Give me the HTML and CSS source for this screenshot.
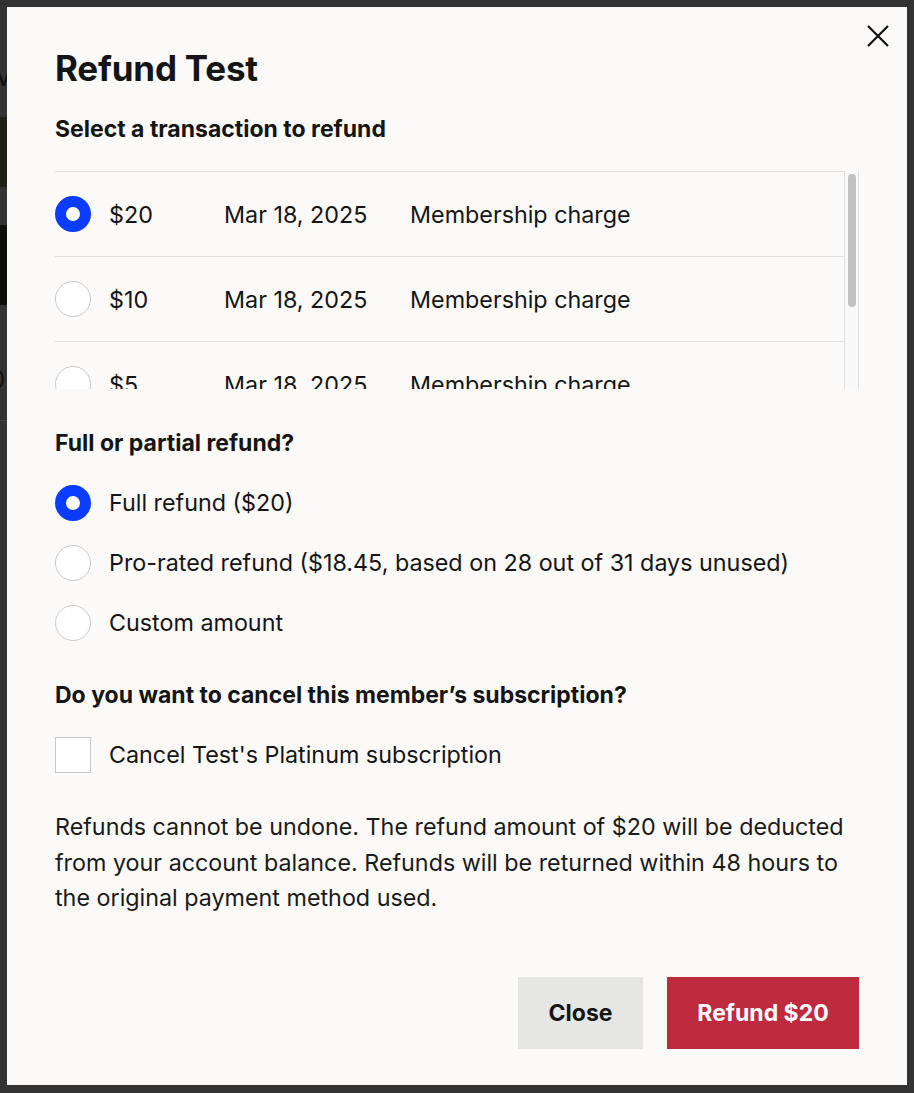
FILE: index.html
```html
<!DOCTYPE html>
<html lang="en">
<head>
<meta charset="utf-8">
<title>Refund Test</title>
<link rel="stylesheet" href="styles.css">
</head>
<body>
<div class="page">
  <div class="page-text">M</div>
  <div class="page-img img-a"></div>
  <div class="page-img img-b"></div>
  <div class="page-text small">0</div>
  <div class="page-rule"></div>
</div>
<div class="overlay">
  <div class="modal" role="dialog" aria-labelledby="title">
    <button class="close-x" aria-label="Close">
      <svg width="22" height="22" viewBox="0 0 22 22"><path d="M1 1L21 21M21 1L1 21" stroke="#111" stroke-width="2.2" fill="none"/></svg>
    </button>
    <h1 id="title" class="title">Refund Test</h1>
    <h2 class="section-title select-title">Select a transaction to refund</h2>
    <div class="tx-wrap">
      <div class="tx-list">
        <div class="tx-row">
          <span class="radio checked"></span>
          <span class="tx-amount">$20</span>
          <span class="tx-date">Mar 18, 2025</span>
          <span class="tx-desc">Membership charge</span>
        </div>
        <div class="tx-row">
          <span class="radio"></span>
          <span class="tx-amount">$10</span>
          <span class="tx-date">Mar 18, 2025</span>
          <span class="tx-desc">Membership charge</span>
        </div>
        <div class="tx-row">
          <span class="radio"></span>
          <span class="tx-amount">$5</span>
          <span class="tx-date">Mar 18, 2025</span>
          <span class="tx-desc">Membership charge</span>
        </div>
      </div>
      <div class="scrollbar"><div class="thumb"></div></div>
    </div>

    <h2 class="section-title refund-title">Full or partial refund?</h2>
    <div class="options">
      <div class="option"><span class="radio checked"></span><span>Full refund ($20)</span></div>
      <div class="option"><span class="radio"></span><span>Pro-rated refund ($18.45, based on 28 out of 31 days unused)</span></div>
      <div class="option"><span class="radio"></span><span>Custom amount</span></div>
    </div>

    <h2 class="section-title cancel-title">Do you want to cancel this member’s subscription?</h2>
    <div class="option check-option"><span class="checkbox"></span><span>Cancel Test's Platinum subscription</span></div>

    <p class="note">Refunds cannot be undone. The refund amount of $20 will be deducted from your account balance. Refunds will be returned within 48 hours to the original payment method used.</p>

    <div class="actions">
      <button class="btn btn-secondary">Close</button>
      <button class="btn btn-primary">Refund $20</button>
    </div>
  </div>
</div>
</body>
</html>
```
FILE: styles.css
```css
* { box-sizing: border-box; }
html, body { margin: 0; padding: 0; }
body {
  background: #333333;
  font-family: Inter, "Noto Sans", "Liberation Sans", sans-serif;
  color: #151515;
  width: 914px;
  height: 1093px;
  overflow: hidden;
}
.page {
  display: flex;
  flex-direction: column;
  width: 7px;
  padding-top: 55px;
  overflow: hidden;
}
.page-text { color: #111; font-size: 30px; line-height: 40px; margin-left: -10px; }
.page-text.small { font-size: 24px; margin-top: 55px; }
.page-img { width: 7px; }
.img-a { height: 70px; margin-top: 22px; background: #1c2016; }
.img-b { height: 80px; margin-top: 38px; background: #0e0e0c; }
.page-rule { height: 1px; background: #444; margin-top: 20px; }

.overlay {
  position: fixed;
  inset: 0;
  padding: 7px;
}
.modal {
  position: relative;
  width: 900px;
  height: 1078px;
  background: #fbfaf8;
  padding: 39px 48px 0 48px;
  display: flex;
  flex-direction: column;
}
.close-x {
  position: absolute;
  top: 18px;
  right: 18px;
  width: 22px;
  height: 22px;
  padding: 0;
  border: 0;
  background: none;
  display: flex;
}
.title {
  margin: 0;
  font-size: 35px;
  line-height: 44px;
  font-weight: 700;
  letter-spacing: -0.2px;
}
.section-title {
  margin: 0;
  font-size: 23px;
  line-height: 30px;
  font-weight: 700;
}
.select-title { margin-top: 24px; }

.tx-wrap {
  margin-top: 27px;
  height: 218px;
  display: flex;
}
.tx-list {
  flex: 1;
  overflow: hidden;
}
.scrollbar {
  flex: none;
  width: 15px;
  background: #f8f8f8;
  border-left: 1px solid #e2e2e2;
  border-right: 1px solid #e2e2e2;
  padding: 3px 2px 0 3px;
}
.thumb {
  width: 8px;
  height: 133px;
  border-radius: 4px;
  background: #c2c2c2;
}
.tx-row {
  display: flex;
  align-items: center;
  height: 85px;
  border-bottom: 1px solid #e2e1df;
  font-size: 23.3px;
}
.tx-row:first-child { border-top: 1px solid #e2e1df; height: 86px; }
.radio {
  flex: none;
  width: 36px;
  height: 36px;
  border-radius: 50%;
  background: #fff;
  border: 1px solid #c8c8c8;
  margin-right: 18px;
}
.radio.checked {
  border: 11px solid #0b3cff;
  background: #fff;
}
.tx-amount { width: 115px; }
.tx-date { width: 186px; }

.refund-title { margin-top: 39px; }
.options {
  margin-top: 27px;
  display: flex;
  flex-direction: column;
  gap: 24px;
}
.option {
  display: flex;
  align-items: center;
  font-size: 23.3px;
  line-height: 36px;
}
.cancel-title { margin-top: 39px; }
.check-option { margin-top: 27px; }
.checkbox {
  flex: none;
  width: 36px;
  height: 36px;
  background: #fff;
  border: 1px solid #c8c8c8;
  margin-right: 18px;
}
.note {
  margin: 36px 0 0 0;
  font-size: 23.3px;
  line-height: 35.5px;
  color: #1a1a1a;
}
.actions {
  margin-top: 61px;
  display: flex;
  justify-content: flex-end;
  gap: 24px;
}
.btn {
  height: 72px;
  border: 0;
  font-family: inherit;
  font-size: 23px;
  font-weight: 700;
  padding: 0;
}
.btn-secondary { background: #e6e6e4; color: #151515; width: 125px; }
.btn-primary { background: #be2b3e; color: #fff; width: 192px; }
```
